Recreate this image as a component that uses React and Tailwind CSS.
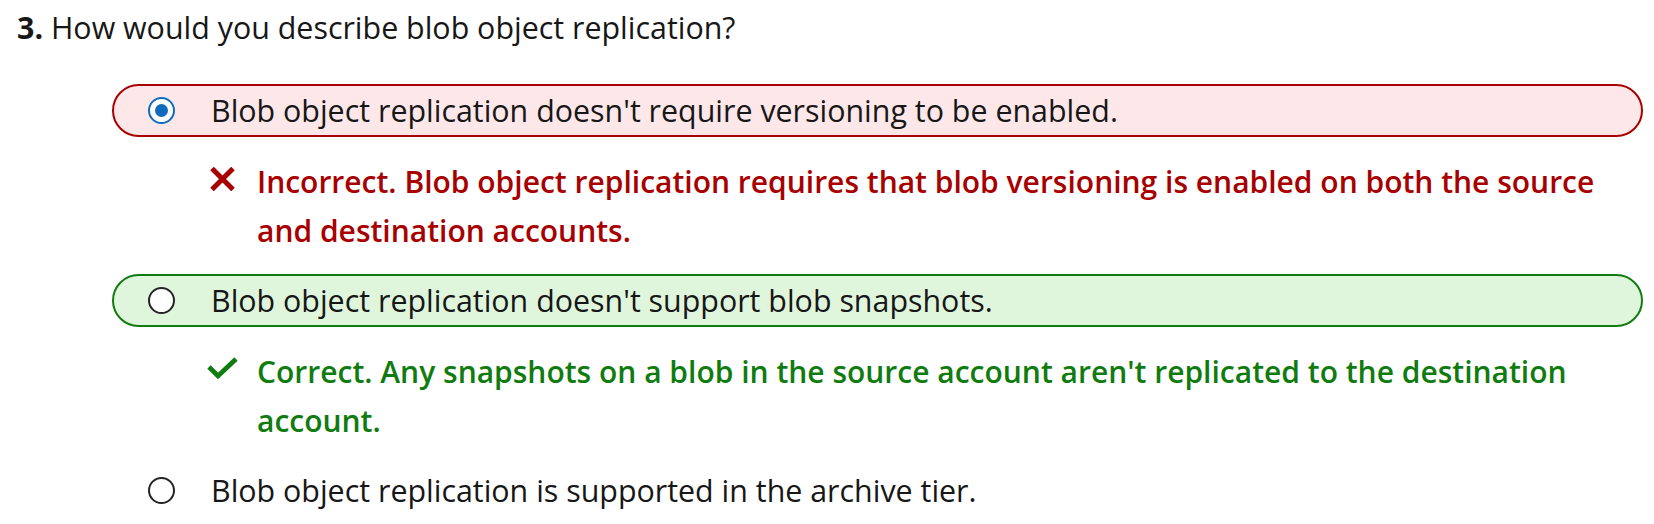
import React from 'react';

const options = [
  {
    text: "Blob object replication doesn't require versioning to be enabled.",
    selected: true,
    state: 'incorrect',
    feedback:
      'Incorrect. Blob object replication requires that blob versioning is enabled on both the source and destination accounts.',
  },
  {
    text: "Blob object replication doesn't support blob snapshots.",
    selected: false,
    state: 'correct',
    feedback:
      "Correct. Any snapshots on a blob in the source account aren't replicated to the destination account.",
  },
  {
    text: 'Blob object replication is supported in the archive tier.',
    selected: false,
    state: null,
  },
];

function Radio({ selected }) {
  if (selected) {
    return (
      <span className="flex h-[27px] w-[27px] shrink-0 items-center justify-center rounded-full border-2 border-[#0f6cbd] bg-white">
        <span className="h-[13px] w-[13px] rounded-full bg-[#0f6cbd]" />
      </span>
    );
  }
  return <span className="h-[27px] w-[27px] shrink-0 rounded-full border-2 border-[#242424] bg-white" />;
}

function CrossIcon() {
  return (
    <svg width="27" height="24" viewBox="0 0 27 24" className="shrink-0">
      <path d="M3 1.5 L24 22.5 M24 1.5 L3 22.5" stroke="#a80000" strokeWidth="5" />
    </svg>
  );
}

function CheckIcon() {
  return (
    <svg width="31" height="23" viewBox="0 0 31 23" className="-ml-[2px] shrink-0">
      <path d="M2 10 L11 19 L29 2" stroke="#107c10" strokeWidth="4.8" fill="none" />
    </svg>
  );
}

function Option({ option }) {
  const boxClass =
    option.state === 'incorrect'
      ? 'border-[#a80000] bg-[#fde7e9]'
      : option.state === 'correct'
        ? 'border-[#107c10] bg-[#dff6dd]'
        : 'border-transparent bg-white';

  return (
    <div>
      <div className={`flex h-[53px] items-center rounded-full border-2 pl-[34px] ${boxClass}`}>
        <Radio selected={option.selected} />
        <span className="ml-[36px] text-[30.4px] text-[#171717]">{option.text}</span>
      </div>
      {option.feedback && (
        <div className="mt-[20px] mb-[19px] flex items-start pl-[97px] pr-[30px] font-semibold">
          <span className="flex w-[48px] shrink-0 pt-[10px]">
            {option.state === 'incorrect' ? <CrossIcon /> : <CheckIcon />}
          </span>
          <p className={option.state === 'incorrect' ? 'text-[#a80000]' : 'text-[#107c10]'}>
            {option.feedback}
          </p>
        </div>
      )}
    </div>
  );
}

export default function App() {
  return (
    <div className="bg-white pt-[3px] pl-[17px] text-[30px] leading-[49px] font-['Open_Sans','Noto_Sans',sans-serif] text-[#171717]">
      <p className="text-[30.4px]">
        <span className="font-bold">3.</span> How would you describe blob object replication?
      </p>
      <div className="mt-[32px] ml-[95px] w-[1531px]">
        {options.map((o, i) => (
          <Option key={i} option={o} />
        ))}
      </div>
    </div>
  );
}
